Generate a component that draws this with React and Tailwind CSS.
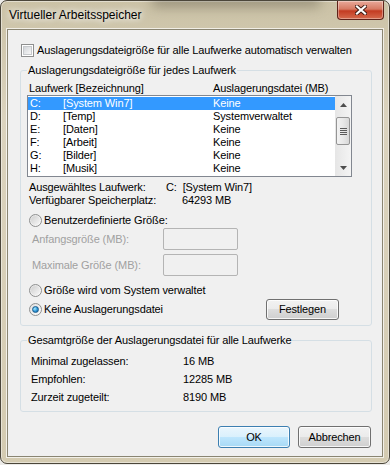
const drives = [
  ["C:", "[System Win7]", "Keine"],
  ["D:", "[Temp]", "Systemverwaltet"],
  ["E:", "[Daten]", "Keine"],
  ["F:", "[Arbeit]", "Keine"],
  ["G:", "[Bilder]", "Keine"],
  ["H:", "[Musik]", "Keine"],
];

function Checkbox() {
  return (
    <span className="flex h-[13px] w-[13px] shrink-0 items-center justify-center border border-[#8e8f8f] bg-white">
      <span className="h-[9px] w-[9px] border border-[#c6c9cc] bg-[linear-gradient(135deg,#d3d6da,#f7f7f7)]" />
    </span>
  );
}

function Radio({ checked }) {
  return (
    <span className="flex h-[13px] w-[13px] shrink-0 items-center justify-center rounded-full border border-[#8e8f8f] bg-[linear-gradient(135deg,#e0e0e0,#fdfdfd)]">
      {checked ? (
        <span className="h-[7px] w-[7px] rounded-full border border-[#1a5c8e] bg-[radial-gradient(circle_at_35%_35%,#a8ecff,#2d95d6_55%,#0f5a92)]" />
      ) : (
        <span className="h-[9px] w-[9px] rounded-full bg-[linear-gradient(135deg,#cfcfcf,#f7f7f7)]" />
      )}
    </span>
  );
}

function Button({ children, primary, className = "" }) {
  return (
    <div
      className={`flex items-center justify-center rounded-[3px] border ${
        primary
          ? "border-[#3c7fb1] bg-[linear-gradient(#eaf6fd_0%,#d9f0fc_50%,#bee6fd_50%,#a7d9f5_100%)]"
          : "border-[#707070] bg-[linear-gradient(#f2f2f2_0%,#ebebeb_50%,#dddddd_50%,#cfcfcf_100%)]"
      } shadow-[inset_0_0_0_1px_rgba(255,255,255,0.8)] ${className}`}
    >
      {children}
    </div>
  );
}

function Arrow({ down }) {
  return (
    <svg width="7" height="4" viewBox="0 0 7 4">
      <path d={down ? "M0 0h7L3.5 4z" : "M0 4h7L3.5 0z"} fill="#4d4d4d" />
    </svg>
  );
}

function Scrollbar() {
  return (
    <div className="flex w-[16px] flex-col bg-[linear-gradient(90deg,#e6e6e6,#f4f4f4)]">
      <div className="flex h-[17px] items-center justify-center">
        <Arrow />
      </div>
      <div className="flex-1">
        <div className="ml-[1px] mt-[4px] flex h-[28px] w-[14px] flex-col items-center justify-center gap-[1px] rounded-[2px] border border-[#959595] bg-[linear-gradient(90deg,#f3f3f3,#e8e8e8_50%,#d8d8d8)]">
          <span className="h-px w-[7px] bg-[#5a5a5a]" />
          <span className="h-px w-[7px] bg-[#5a5a5a]" />
          <span className="h-px w-[7px] bg-[#5a5a5a]" />
          <span className="h-px w-[7px] bg-[#5a5a5a]" />
        </div>
      </div>
      <div className="flex h-[17px] items-center justify-center">
        <Arrow down />
      </div>
    </div>
  );
}

export default function App() {
  return (
    <div className="h-[465px] w-[390px] bg-[#ecebe8] font-['Liberation_Sans',Arial,sans-serif] text-[11px] leading-[13px] tracking-[-0.12px] text-black">
      <div className="relative h-[464px] w-[390px] overflow-hidden rounded-[7px] border border-[#4b463a] bg-[linear-gradient(180deg,#cbc2a6_0%,#dbd3be_25%,#d4cbb1_100%)] shadow-[inset_0_0_0_1px_rgba(255,255,255,0.45)]">
        <div className="absolute left-[150px] top-[-6px] h-[12px] w-[170px] rounded-full bg-[#5d5746]/45 blur-[6px]" />

        <div className="relative flex h-[28px] items-center pl-[8px] pt-px text-[12px] tracking-normal [text-shadow:0_0_6px_#fff,0_0_10px_#fff]">
          Virtueller Arbeitsspeicher
        </div>
        <div className="absolute right-[5px] top-0 flex h-[19px] w-[47px] items-center justify-center rounded-b-[4px] border border-t-0 border-[#5e2219] bg-[linear-gradient(#e9a99a_0%,#d67a63_45%,#c33b22_55%,#d56a4d_100%)] shadow-[inset_0_0_0_1px_rgba(255,255,255,0.35)]">
          <svg width="12" height="10" viewBox="0 0 12 10">
            <path d="M2 1.5l8 7M10 1.5l-8 7" stroke="#3f1a12" strokeWidth="4" strokeLinecap="square" />
            <path d="M2 1.5l8 7M10 1.5l-8 7" stroke="#fff" strokeWidth="2.2" strokeLinecap="square" />
          </svg>
        </div>

        <div className="ml-[6px] flex h-[428px] w-[376px] flex-col border border-[#8a8572] bg-[#f0f0f0] shadow-[0_0_0_1px_rgba(255,255,255,0.7)]">
          <div className="mt-[14px] flex h-[13px] items-center gap-[3px] pl-[13px]">
            <Checkbox />
            <span>Auslagerungsdateigröße für alle Laufwerke automatisch verwalten</span>
          </div>

          <fieldset className="ml-[12px] mt-[6px] w-[352px] rounded-[3px] border border-[#d5dfe5] px-[6px] pb-[5px]">
            <legend className="px-px leading-[15px]">Auslagerungsdateigröße für jedes Laufwerk</legend>
            <div className="mt-[3px] flex h-[14px] items-center pl-[2px]">
              <span className="w-[184px]">Laufwerk [Bezeichnung]</span>
              <span>Auslagerungsdatei (MB)</span>
            </div>
            <div className="flex h-[82px] w-[325px] border border-[#828790] bg-white">
              <div className="flex-1 pt-px">
                {drives.map(([letter, label, value], i) => (
                  <div
                    key={letter}
                    className={`flex h-[13px] items-center pl-[2px] ${i === 0 ? "bg-[#3399ff] text-white" : ""}`}
                  >
                    <span className="w-[33px]">{letter}</span>
                    <span className="w-[150px]">{label}</span>
                    <span>{value}</span>
                  </div>
                ))}
              </div>
              <Scrollbar />
            </div>

            <div className="mt-[4px] flex h-[13px] items-center pl-[2px]">
              <span className="w-[137px]">Ausgewähltes Laufwerk:</span>
              <span>C:&nbsp;&nbsp;[System Win7]</span>
            </div>
            <div className="flex h-[13px] items-center pl-[2px]">
              <span className="w-[153px]">Verfügbarer Speicherplatz:</span>
              <span>64293 MB</span>
            </div>

            <div className="mt-[6px] flex h-[15px] items-center gap-[2px] pl-[2px]">
              <Radio />
              <span>Benutzerdefinierte Größe:</span>
            </div>
            <div className="flex h-[22px] items-center pl-[5px] text-[#a0a0a0]">
              <span className="w-[131px]">Anfangsgröße (MB):</span>
              <span className="h-[22px] w-[75px] rounded-[2px] border border-[#b4b4b4] bg-[#f0f0f0]" />
            </div>
            <div className="mt-[4px] flex h-[22px] items-center pl-[5px] text-[#a0a0a0]">
              <span className="w-[131px]">Maximale Größe (MB):</span>
              <span className="h-[22px] w-[75px] rounded-[2px] border border-[#b4b4b4] bg-[#f0f0f0]" />
            </div>

            <div className="mt-[7px] flex h-[14px] items-center gap-[2px] pl-[2px]">
              <Radio />
              <span>Größe wird vom System verwaltet</span>
            </div>
            <div className="mt-[2px] flex h-[21px] items-center pl-[2px]">
              <div className="flex w-[237px] items-center gap-[2px]">
                <Radio checked />
                <span>Keine Auslagerungsdatei</span>
              </div>
              <Button className="h-[21px] w-[73px]">Festlegen</Button>
            </div>
          </fieldset>

          <fieldset className="ml-[12px] mt-[7px] w-[352px] rounded-[3px] border border-[#d5dfe5] px-[6px] pb-[5px]">
            <legend className="px-px leading-[15px]">Gesamtgröße der Auslagerungsdatei für alle Laufwerke</legend>
            <div className="mt-[4px] pl-[4px]">
              {[
                ["Minimal zugelassen:", "16 MB"],
                ["Empfohlen:", "12285 MB"],
                ["Zurzeit zugeteilt:", "8190 MB"],
              ].map(([label, value]) => (
                <div key={label} className="flex h-[18px] items-center">
                  <span className="w-[152px]">{label}</span>
                  <span>{value}</span>
                </div>
              ))}
            </div>
          </fieldset>

          <div className="mt-[14px] flex justify-end gap-[8px] pr-[11px]">
            <Button primary className="h-[22px] w-[72px]">OK</Button>
            <Button className="h-[22px] w-[73px]">Abbrechen</Button>
          </div>
        </div>
      </div>
    </div>
  );
}
